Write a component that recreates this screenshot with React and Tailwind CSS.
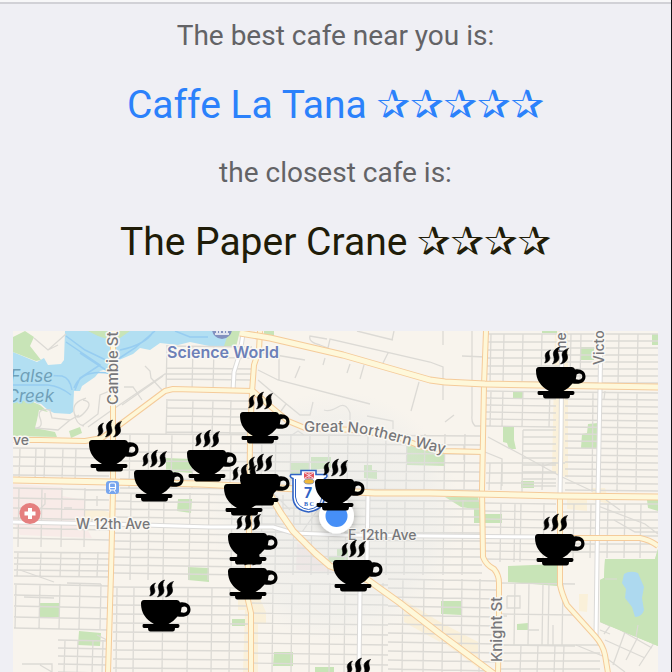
import React from "react";

const parks = [
  "13,337 25,331 34,337 30,346 41,360 36,361 13,352",
  "13,403 28,400 40,405 48,412 39,410 37,420 35,428 55,432 57,437 13,436",
  "88,331 98,336 110,340 120,338 130,331",
  "69,431 80,427 82,433 71,438",
  "229,331 240,331 236,347 224,346",
  "264,331 274,331 274,336 264,335",
  "166,458 192,459 192,473 166,471",
  "178,499 192,499 191,513 177,511",
  "188,567 209,568 209,582 188,580",
  "40,603 60,603 59,617 40,617",
  "79,631 101,633 100,646 78,645",
  "232,619 245,619 245,626 232,626",
  "274,652 293,652 293,666 273,666",
  "315,667 334,667 334,673 315,673",
  "337,549 348,549 348,562 328,562 328,557 337,557",
  "290,463 310,463 310,472 290,480",
  "311,457 331,457 331,468 311,470",
  "364,465 372,465 372,470 377,470 377,479 364,478",
  "407,445 425,449 445,453 445,466 407,465",
  "581,347 594,347 594,360 581,360",
  "652,334 658,334 658,345 652,345",
  "513,391 523,391 523,398 513,398",
  "503,426 514,426 514,440 516,449 509,449 507,443 503,442",
  "588,424 598,423 598,449 581,448 582,434 587,433",
  "521,481 534,481 534,488 521,488",
  "445,497 478,497 482,514 502,514 502,523 474,523 474,509 461,507",
  "508,566 558,564 557,586 508,582",
  "441,601 461,601 461,615 441,614",
  "517,624 528,623 528,630 517,630",
  "605,559 655,559 658,549 658,646 600,622 600,580 604,578",
  "647,500 658,500 658,511 648,508",
  "542,331 557,331 557,333 542,333",
];

const beige = [
  "85,510 103,510 110,513 110,521 85,521",
  "555,331 568,331 568,478 552,472",
  "238,590 256,590 266,612 266,624 258,624 258,672 243,672 245,610 238,610",
  "404,600 440,622 440,642 404,622",
  "440,622 478,642 478,668 440,640",
  "567,498 587,498 587,511 567,509",
  "579,594 588,594 587,612 579,611",
  "592,488 605,488 610,504 592,500",
];

const minorPaths = [
  "M66 334L48 350L34 338M48 350L58 345",
  "M86 398Q72 402 74 412T85 412T83 400M74 412Q76 425 84 426M51 410Q36 408 40 418T35 428L58 430L70 420M50 411L52 418L70 420L79 415M82 426L98 414L100 395L112 390M88 427L112 410L165 374H253",
  "M145 366L150 371L151 378L162 390M124 387H133L142 400M122 405L163 376",
  "M258 370L278 380L370 404M279 348V380M295 378L300 366M258 352L305 360M323 365L325 358M347 373L350 364M360 379L364 365M327 339L310 336Q308 342 320 345L328 348L330 339L430 362L443 367V400M382 365L388 353M411 411L419 382M392 340L394 331M357 331L393 340",
  "M258 380L284 402L300 415H310L313 402M281 411L286 404M324 410Q330 412 338 407T350 413V430M367 416L393 421V429M292 435L298 431L304 435",
  "M443 331V345M472 331V415Q471 422 475 426H484M462 356L486 357M445 422L454 415",
  "M488 437L522 455L560 476L590 490M485 452L502 459V486M464 445V460M544 466L552 463H565M604 399L605 391",
  "M507 596H520V608H507V596M507 616H503M528 630H539M553 625V645M576 645L605 657L625 672M601 622L610 626L604 634M613 665L625 632M626 660L642 629M639 666L656 640M605 640L645 658M617 628L652 648M600 630L610 634",
  "M614 520L635 532H658M598 506L645 524L658 534M606 500L620 510",
  "M36 513L45 504V493M97 496V506M64 508H72M20 570L54 582M67 583L101 584M24 597L54 598M97 635L107 640M40 665L52 672V664H22",
  "M270 490L290 510M330 492L300 535M283 495V520M300 505V525",
];

const districts = [
  { x0: 166, x1: 252, y0: 346, y1: 392, dy: 11, tilt: 1, xs: [167, 193, 214] },
  { x0: 120, x1: 480, y0: 434, y1: 489, dy: 9, tilt: 2, xs: [130, 149, 172, 193, 210, 231, 262, 276, 291, 310, 329, 348, 368, 386, 407, 425, 445, 465] },
  { x0: 166, x1: 252, y0: 400, y1: 434, dy: 8, tilt: 1, xs: [167, 193, 213, 231] },
  { x0: 13, x1: 109, y0: 448, y1: 480, dy: 9, tilt: 1, xs: [20, 36, 45, 63, 76] },
  { x0: 13, x1: 109, y0: 488, y1: 547, dy: 10, tilt: 2, xs: [19, 42, 62, 85] },
  { x0: 14, x1: 109, y0: 552, y1: 577, dy: 6, tilt: 1, xs: [18, 41, 61, 80, 98] },
  { x0: 14, x1: 109, y0: 584, y1: 629, dy: 11, tilt: 2, xs: [16, 40, 60, 80, 101] },
  { x0: 58, x1: 108, y0: 640, y1: 674, dy: 8, tilt: 1, xs: [65, 78, 93, 103] },
  { x0: 114, x1: 248, y0: 493, y1: 580, dy: 8, tilt: 2, xs: [131, 149, 164, 190, 209, 232] },
  { x0: 113, x1: 248, y0: 587, y1: 674, dy: 9, tilt: 1, xs: [117, 134, 163, 188, 212, 230] },
  { x0: 251, x1: 482, y0: 500, y1: 575, dy: 8, tilt: 1, xs: [262, 276, 294, 312, 329, 346, 387, 405, 424, 444, 463] },
  { x0: 252, x1: 388, y0: 583, y1: 674, dy: 10, tilt: 2, xs: [273, 292, 310, 330, 345, 383] },
  { x0: 388, x1: 497, y0: 579, y1: 674, dy: 9, tilt: 2, xs: [403, 424, 443, 462, 480] },
  { x0: 487, x1: 560, y0: 334, y1: 383, dy: 8, tilt: 0, xs: [491, 504, 523, 542] },
  { x0: 563, x1: 658, y0: 334, y1: 383, dy: 7, tilt: 0, xs: [571, 581, 619, 638] },
  { x0: 486, x1: 556, y0: 391, y1: 427, dy: 7, tilt: 1, xs: [491, 503, 523, 550] },
  { x0: 565, x1: 658, y0: 392, y1: 492, dy: 7, tilt: 1, xs: [593, 618, 637] },
  { x0: 523, x1: 556, y0: 430, y1: 492, dy: 7, tilt: 0, xs: [523] },
  { x0: 486, x1: 556, y0: 463, y1: 490, dy: 10, tilt: 0, xs: [490, 502, 543] },
  { x0: 484, x1: 556, y0: 503, y1: 562, dy: 8, tilt: 1, xs: [501, 515, 521, 544] },
  { x0: 563, x1: 658, y0: 504, y1: 558, dy: 8, tilt: 0, xs: [574, 591, 608, 625, 641] },
  { x0: 500, x1: 575, y0: 583, y1: 645, dy: 31, tilt: 1, xs: [515, 529, 543, 549, 563] },
  { x0: 501, x1: 600, y0: 645, y1: 674, dy: 8, tilt: 0, xs: [521, 538, 555, 564] },
];

function gridPath({ x0, x1, y0, y1, dy, tilt, xs }) {
  let d = "";
  for (let y = y0; y <= y1; y += dy) d += `M${x0} ${y}L${x1} ${y + tilt}`;
  for (const x of xs) d += `M${x} ${y0}L${x - 1} ${y1}`;
  return d;
}

const whiteRoads = [
  "M243 334L240 353L234 372L233 391",
  "M13 522L110 524L210 527H273L293 533L345 535L430 536L550 537",
  "M562 331L561 440L560 495",
  "M601 331L600 390L598 495L597 560L596 637",
  "M368 495L367 560L360 592L359 672",
];

const yellowRoads = [
  "M13 440H40L85 441L102 438L165 391L173 389L253 391",
  "M253 391L270 406L288 421L305 428L355 430L395 436L420 446L445 451L484 452",
  "M560 496V585Q562 594 567 605L595 636Q603 645 605 655L608 673",
  "M556 538H640Q650 540 658 546",
  "M113 331V490L111 573L108 673",
  "M260 331L259 350L254 365L252 392L250 440L249 530L247 596L251 613V673",
  "M486 331L484 385L482 490L483 557Q486 565 494 569Q499 575 499 583V620L498 673",
];

const arterials = [
  "M13 480L110 482L200 484L375 493H430L560 496L658 497",
  "M240 333L270 338L343 355L430 380L445 382L485 384L658 387",
  "M250 480L268 491L280 512L293 531L315 553L330 566L368 580L400 603L440 634L494 674",
];

const cafes = [
  [536, 367], [240, 412], [89, 440], [187, 450], [134, 470], [240, 474], [224, 484],
  [315, 479], [535, 534], [228, 533], [228, 568], [333, 560], [141, 600], [338, 678],
];

function Roads({ paths, casing, casingWidth, color, width }) {
  return (
    <g fill="none" strokeLinejoin="round">
      {paths.map((d) => <path key={d} d={d} stroke={casing} strokeWidth={casingWidth} />)}
      {paths.map((d) => <path key={d + "f"} d={d} stroke={color} strokeWidth={width} />)}
    </g>
  );
}

function Cup({ x, y }) {
  return (
    <g transform={`translate(${x} ${y})`}>
      <path
        fillRule="evenodd"
        d="M3 0H36Q38.400 0 39 2.500C45 1.500 49.500 4.500 49.500 9.500C49.500 15 45 17.800 36.500 16.500Q32.500 21.500 27.500 24H13Q0 17 0 3.500Q0 0 3 0ZM39.800 12.200C44 13.500 46.300 12 46.300 9.500C46.300 6.800 43.500 5.500 40.600 7.500Z"
      />
      <path d="M2.500 24H37Q38.500 24 38.500 25.700T37 28H34Q34 31.500 31.500 31.500H9.500Q7 31.500 7 28H3Q1.500 28 1.500 26T2.500 24Z" />
      <g stroke="#000" strokeWidth="0.600" strokeLinejoin="round">
        <path d="M14.500 -17C10 -15.500 8.500 -12.500 9.500 -9.500C10.300 -7 9.500 -5.500 8.700 -4C13 -5 14.800 -8 13.500 -11C12.500 -13.500 13 -15.500 14.500 -17Z" />
        <path d="M23.500 -20C18 -18 16.500 -14.500 17.800 -10.500C18.800 -7.500 18 -5 16.500 -3C22 -4.500 24 -8 22.500 -12C21.300 -15.500 22 -18 23.500 -20Z" />
        <path d="M32.500 -18.500C27 -17 25 -13.500 26.500 -10C27.500 -7 26.500 -5 24.500 -3C30 -4 32.500 -8 31.300 -11.500C30.200 -14.500 31 -17 32.500 -18.500Z" />
      </g>
    </g>
  );
}

function CityMap() {
  return (
    <svg viewBox="13 331 645 341" className="block h-auto w-full" role="img" aria-label="Map of nearby cafes">
      <defs>
        <radialGradient id="accuracy">
          <stop offset="0" stopColor="#dfe4e6" stopOpacity="0.4" />
          <stop offset="0.8" stopColor="#e5e8e8" stopOpacity="0.3" />
          <stop offset="1" stopColor="#e8eaea" stopOpacity="0" />
        </radialGradient>
        <filter id="dotShadow" x="-50%" y="-50%" width="200%" height="200%">
          <feDropShadow dx="0" dy="1" stdDeviation="4" floodOpacity="0.3" />
        </filter>
        <path id="northernWay" d="M304 432H343Q365 433 390 440T455 456" />
      </defs>
      <rect x="13" y="331" width="645" height="341" fill="#f8f4ed" />
      <polygon points="13,484 62,487 62,496 85,500 85,525 92,538 20,535 13,520" fill="#f8ebe8" />
      <polygon points="297,543 310,550 330,566 332,572 296,570" fill="#f4e8e5" />
      {beige.map((p) => <polygon key={p} points={p} fill="#faf0d9" />)}
      <polygon
        points="65,331 64,360 61,364 48,365 44,358 37,362 32,360 13,352 13,404 19,406 28,399 40,403 48,410 54,413 70,414 73,412 74,391 80,391 82,386 95,377 100,371 110,368 119,360 133,354 140,348 150,350 160,343 178,345 190,342 214,347 234,347 239,331"
        fill="#b2dff2"
      />
      <g fill="none" stroke="#97cdf1" strokeWidth="1.500">
        <path d="M66 336L85 350L112 363M66 342L100 365L80 378L75 390M80 353L112 374Q82 368 74 388M112 363L135 348L155 331M40 375L62 376Q70 378 72 390M13 385H48Q60 386 71 395M175 331L190 337H208M120 350Q145 345 153 332" />
      </g>
      {parks.map((p) => <polygon key={p} points={p} fill="#c8e4b7" />)}
      <g fill="none" stroke="#dcdad5" strokeWidth="1.300">
        {districts.map((area) => <path key={`${area.x0}-${area.y0}`} d={gridPath(area)} />)}
        {minorPaths.map((d) => <path key={d} d={d} />)}
      </g>
      <polygon points="605,559 655,559 658,549 658,646 600,622 600,580 604,578" fill="#c8e4b7" />
      <path d="M605 579H617M638 625L636 637" stroke="#dcdad5" strokeWidth="1.200" />
      <path d="M624 574Q630 570 638 573L641 580L644 587L642 598L644 610Q642 617 635 617L632 607L625 598L626 589L622 583Z" fill="#add9ef" />
      <circle cx="336" cy="516" r="125" fill="url(#accuracy)" />

      <Roads paths={whiteRoads} casing="#dbdad8" casingWidth={5} color="#ffffff" width={3} />
      <Roads paths={yellowRoads} casing="#f5cb9a" casingWidth={6} color="#fef7d8" width={4} />
      <Roads paths={arterials} casing="#f5cb9a" casingWidth={7} color="#fef8da" width={5} />

      <g fontFamily='Inter, "Liberation Sans", sans-serif' fontSize="14" fontWeight="500" fill="#77777a" stroke="#faf8f3" strokeWidth="3" strokeLinejoin="round" paintOrder="stroke">
        <text x="167" y="358" fontSize="16" fontWeight="600" fill="#6c80b8">Science World</text>
        <g fontSize="17" fontStyle="italic" fontWeight="400" fill="#6f9fb8" stroke="#b2dff2" textAnchor="end">
          <text x="53" y="382">False</text>
          <text x="54" y="402">Creek</text>
        </g>
        <text transform="translate(118 405) rotate(-90)" fontSize="15">Cambie St</text>
        <text transform="translate(502 662) rotate(-90)" fontSize="15">Knight St</text>
        <text transform="translate(604 365) rotate(-90)">Victo</text>
        <text transform="translate(566 353) rotate(-90)">me</text>
        <text x="13" y="445">ve</text>
        <text x="76" y="529">W 12th Ave</text>
        <text fontSize="15"><textPath href="#northernWay">Great Northern Way</textPath></text>
      </g>

      <circle cx="222" cy="329" r="10" fill="#8291bf" />
      <path d="M215 334H229M217 327V333M220 327V333M224 327V333M227 327V333" stroke="#fff" strokeWidth="1.500" />
      <circle cx="30" cy="513.500" r="10.500" fill="#e57f7f" />
      <path d="M30 508V519M24.500 513.500H35.500" stroke="#fff" strokeWidth="4" />
      <rect x="106" y="481" width="13" height="13" rx="3" fill="#76a5ee" />
      <rect x="109.500" y="483" width="6" height="7" rx="1.500" fill="none" stroke="#fff" strokeWidth="1.200" />
      <path d="M110 487.500H115M111 490L109.500 492.500M114 490L115.500 492.500" stroke="#fff" />

      <path
        d="M301 470.500H316V474.500H326.500Q328 477 324.500 478.500V498Q323 510 308.500 512Q294 510 293 498V478.500Q289 477 291 474.500H301Z"
        fill="#fff" stroke="#2e62c5" strokeWidth="1.600"
      />
      <path d="M295.500 479V497Q297 508 308.500 509.500Q320.500 508 322 497V479" fill="none" stroke="#2e62c5" strokeWidth="1" />
      <rect x="304" y="472.500" width="10" height="6" fill="#e2545b" />
      <path d="M304 472.500L314 478.500M314 472.500L304 478.500M309 472.500V478.500" stroke="#f3d4e0" strokeWidth="1" />
      <ellipse cx="309" cy="481.500" rx="5" ry="2.500" fill="#efb83d" stroke="#4c6ab5" strokeWidth="0.600" />
      <g fill="#2e62c5" fontWeight="700" textAnchor="middle">
        <text x="308" y="498" fontFamily='Inter, "Liberation Sans", sans-serif' fontSize="14">7</text>
        <text x="309" y="506" fontFamily='"Liberation Serif", serif' fontSize="6">B C</text>
      </g>

      <circle cx="336.500" cy="516" r="17.500" fill="#fff" filter="url(#dotShadow)" />
      <circle cx="336.500" cy="516" r="11" fill="#468ff7" />
      <text x="348" y="540" fontFamily='Inter, "Liberation Sans", sans-serif' fontSize="14" fontWeight="500" fill="#77777a" stroke="#f4f3ef" strokeWidth="2" paintOrder="stroke">E 12th Ave</text>
      {cafes.map(([x, y]) => <Cup key={`${x}-${y}`} x={x} y={y} />)}
    </svg>
  );
}

function Stars({ count }) {
  return (
    <span className="font-['DejaVu_Sans',sans-serif] text-[40px]" role="img" aria-label={`${count} stars`}>
      {"✰".repeat(count)}
    </span>
  );
}

export default function App() {
  return (
    <main className="min-h-screen border-r border-[#111114] bg-[#efeff4] font-[Roboto,'Liberation_Sans',sans-serif]">
      <div className="h-1 border-b-2 border-[#d1d1d6] bg-[#f7f7f8]" />
      <section className="flex flex-col items-center gap-6 pt-3 text-center">
        <p className="text-[28px] leading-10 text-[#636366]">The best cafe near you is:</p>
        <h1 className="text-[39px] leading-12 text-[#2b81fb]">
          <a href="#caffe-la-tana">Caffe La Tana <Stars count={5} /></a>
        </h1>
        <p className="text-[28px] leading-10 text-[#636366]">the closest cafe is:</p>
        <h2 className="text-[39px] leading-12 text-[#201c08]">
          The Paper Crane <Stars count={4} />
        </h2>
      </section>
      <section className="px-[13px] pt-[65px]">
        <CityMap />
      </section>
    </main>
  );
}
